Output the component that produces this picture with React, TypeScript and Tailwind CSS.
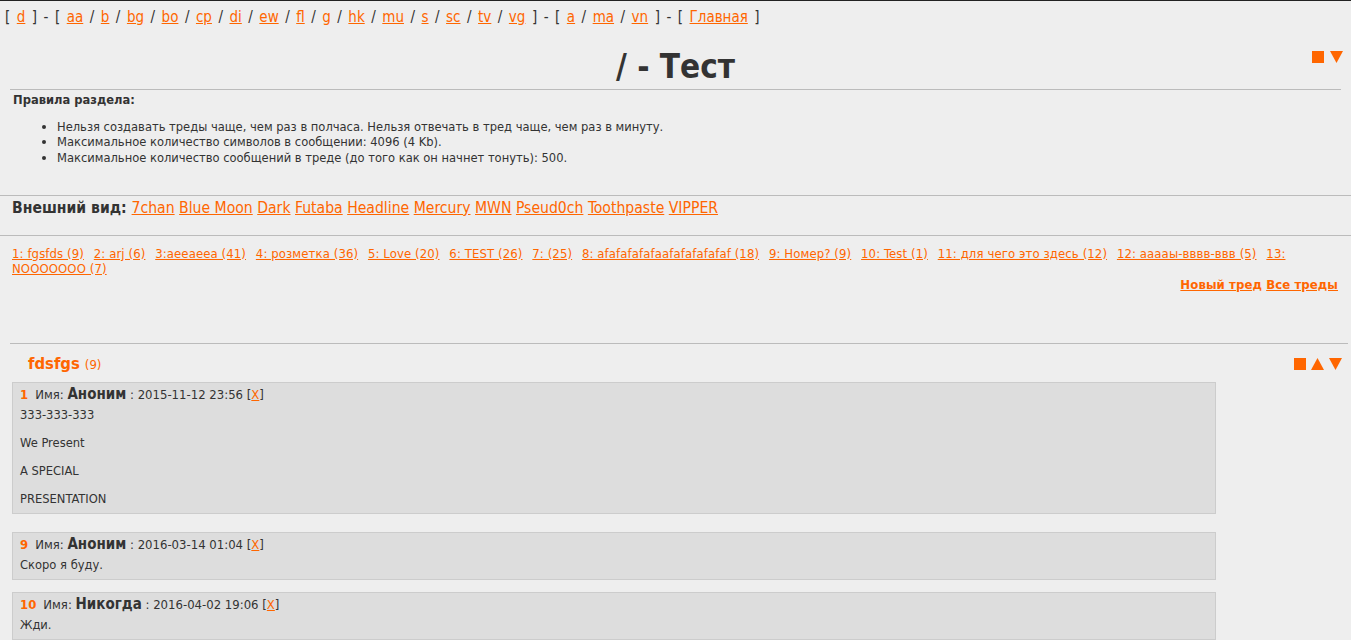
import React from 'react';

const boards1 = ['aa', 'b', 'bg', 'bo', 'cp', 'di', 'ew', 'fl', 'g', 'hk', 'mu', 's', 'sc', 'tv', 'vg'];
const boards2 = ['a', 'ma', 'vn'];
const styles = ['7chan', 'Blue Moon', 'Dark', 'Futaba', 'Headline', 'Mercury', 'MWN', 'Pseud0ch', 'Toothpaste', 'VIPPER'];
const threads = [
  '1: fgsfds (9)',
  '2: arj (6)',
  '3:aeeaeea (41)',
  '4: розметка (36)',
  '5: Love (20)',
  '6: TEST (26)',
  '7: (25)',
  '8: afafafafafaafafafafafaf (18)',
  '9: Номер? (9)',
  '10: Test (1)',
  '11: для чего это здесь (12)',
  '12: аааaы-вввв-ввв (5)',
  '13: NOOOOOOO (7)',
];

const A = ({ children, className = '' }: { children: React.ReactNode; className?: string }) => (
  <a href="#" className={`text-[#ff6600] underline ${className}`}>{children}</a>
);

function BoardGroup({ items }: { items: string[] }) {
  return (
    <>
      [{' '}
      {items.map((b, i) => (
        <React.Fragment key={b}>
          <A>{b}</A>
          {i < items.length - 1 ? ' / ' : ' '}
        </React.Fragment>
      ))}
      ]
    </>
  );
}

const Square = () => <span className="block w-[12px] h-[12px] bg-[#ff6600]" />;
const Down = () => (
  <svg width="13" height="12" viewBox="0 0 13 12" className="block">
    <polygon points="0,0 13,0 6.5,12" fill="#ff6600" />
  </svg>
);
const Up = () => (
  <svg width="13" height="12" viewBox="0 0 13 12" className="block">
    <polygon points="0,12 13,12 6.5,0" fill="#ff6600" />
  </svg>
);

function Post({ num, name, date, lines }: { num: string; name: string; date: string; lines: string[] }) {
  return (
    <div className="ml-[12px] w-[1204px] bg-[#dddddd] border border-[#cccccc] px-[7px] pt-[2px] pb-[6px]">
      <div className="text-[13px] leading-[18px]">
        <span className="text-[#ff6600] font-bold">{num}</span>
        <span className="ml-[7px]">Имя: </span>
        <span className="font-bold text-[15px]">{name}</span>
        <span> : {date} [</span>
        <A>X</A>]
      </div>
      {lines.map((l, i) => (
        <div key={i} className={`text-[12.8px] leading-[16px] ${i > 0 ? 'mt-[12px]' : 'mt-[3px]'}`}>{l}</div>
      ))}
    </div>
  );
}

export default function App() {
  return (
    <div
      className="min-h-[640px] bg-[#eeeeee] text-[#333333] border-t border-[#222222]"
      style={{ fontFamily: '"DejaVu Sans Condensed", "DejaVu Sans", sans-serif' }}
    >
      <div className="px-[5px] pt-[6px] text-[15px] leading-[20px] [word-spacing:2.2px]">
        [ <A>d</A> ] - <BoardGroup items={boards1} /> - <BoardGroup items={boards2} /> - [ <A>Главная</A> ]
      </div>

      <div className="relative mt-[20px] mx-[10px]">
        <div className="absolute right-[-2px] top-[4px] flex gap-[6px] items-center">
          <Square />
          <Down />
        </div>
        <h1 className="text-center font-bold text-[33px] leading-[40px]">/ - Тест</h1>
        <div className="mt-[2px] border-t border-[#bbbbbb]" />
      </div>

      <div className="px-[13px] pt-[2px] text-[12.8px] leading-[15.5px]">
        <div className="font-bold">Правила раздела:</div>
        <ul className="mt-[11px] ml-[35px] list-disc pl-[9px]">
          <li>Нельзя создавать треды чаще, чем раз в полчаса. Нельзя отвечать в тред чаще, чем раз в минуту.</li>
          <li>Максимальное количество символов в сообщении: 4096 (4 Kb).</li>
          <li>Максимальное количество сообщений в треде (до того как он начнет тонуть): 500.</li>
        </ul>
      </div>

      <div className="mt-[30px] border-t border-[#bbbbbb]" />
      <div className="px-[12px] pt-[2px] text-[15.6px] leading-[20px]">
        <span className="font-bold">Внешний вид: </span>
        {styles.map((s) => (
          <React.Fragment key={s}>
            <A>{s}</A>{' '}
          </React.Fragment>
        ))}
      </div>
      <div className="mt-[17px] border-t border-[#bbbbbb]" />

      <div className="px-[12px] pt-[10px] text-[13px] leading-[15px] tracking-[0.1px]">
        <div className="pr-[40px]">
          {threads.map((t) => (
            <React.Fragment key={t}>
              <A className="mr-[6px]">{t}</A>{' '}
            </React.Fragment>
          ))}
        </div>
        <div className="text-right font-bold mt-[1px] pr-[1px]">
          <A>Новый тред</A> <A>Все треды</A>
        </div>
      </div>

      <div className="mt-[51px] ml-[10px] mr-[3px] border-t border-[#bbbbbb]" />

      <div className="flex items-center justify-between pl-[28px] pr-[9px] pt-[8px] pb-[5px]">
        <div>
          <span className="text-[#ff6600] font-bold text-[16.5px]">fdsfgs</span>
          <span className="text-[#ff6600] text-[13px] ml-[5px]">(9)</span>
        </div>
        <div className="flex gap-[5px] items-center">
          <Square />
          <Up />
          <Down />
        </div>
      </div>

      <Post num="1" name="Аноним" date="2015-11-12 23:56" lines={['333-333-333', 'We Present', 'A SPECIAL', 'PRESENTATION']} />
      <div className="h-[18px]" />
      <Post num="9" name="Аноним" date="2016-03-14 01:04" lines={['Скоро я буду.']} />
      <div className="h-[12px]" />
      <Post num="10" name="Никогда" date="2016-04-02 19:06" lines={['Жди.']} />
    </div>
  );
}
